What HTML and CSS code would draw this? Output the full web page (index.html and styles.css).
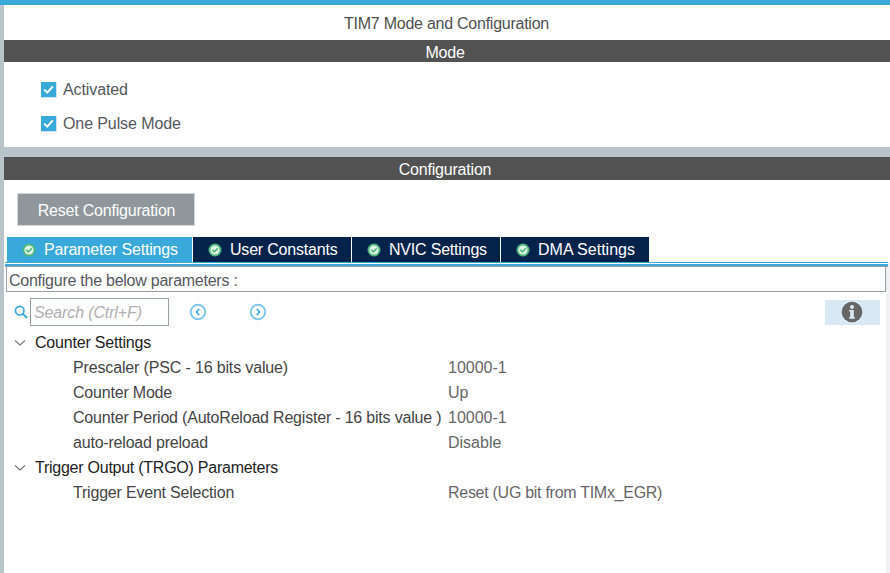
FILE: index.html
```html
<!DOCTYPE html>
<html lang="en">
<head>
<meta charset="utf-8">
<title>TIM7 Mode and Configuration</title>
<link rel="stylesheet" href="styles.css">
</head>
<body>
<div class="topbar"></div>
<main class="panel">
  <h1 class="title">TIM7 Mode and Configuration</h1>
  <h2 class="band band-mode">Mode</h2>
  <section class="mode">
    <label class="check"><span class="box"><svg viewBox="0 0 15 15" width="15" height="15"><path d="M3.2 7.6 6.3 10.6 11.8 4.4" fill="none" stroke="#fff" stroke-width="2"/></svg></span>Activated</label>
    <label class="check"><span class="box"><svg viewBox="0 0 15 15" width="15" height="15"><path d="M3.2 7.6 6.3 10.6 11.8 4.4" fill="none" stroke="#fff" stroke-width="2"/></svg></span>One Pulse Mode</label>
  </section>
  <div class="divider"></div>
  <h2 class="band band-config">Configuration</h2>
  <section class="config">
    <button class="reset">Reset Configuration</button>
    <div class="tabs">
      <div class="tab tab-active"><svg class="ok" viewBox="0 0 14 14" width="14" height="14"><circle cx="7" cy="7" r="6.5" fill="#4fb77c"/><circle cx="7" cy="7" r="4.6" fill="#dff3e7"/><path d="M4.3 6.8 6.3 8.8 9.8 5.4" fill="none" stroke="#4fb77c" stroke-width="1.6"/></svg>Parameter Settings</div>
      <div class="tab tab-user"><svg class="ok" viewBox="0 0 14 14" width="14" height="14"><circle cx="7" cy="7" r="6.5" fill="#4fb77c"/><circle cx="7" cy="7" r="4.6" fill="#dff3e7"/><path d="M4.3 6.8 6.3 8.8 9.8 5.4" fill="none" stroke="#4fb77c" stroke-width="1.6"/></svg>User Constants</div>
      <div class="tab tab-nvic"><svg class="ok" viewBox="0 0 14 14" width="14" height="14"><circle cx="7" cy="7" r="6.5" fill="#4fb77c"/><circle cx="7" cy="7" r="4.6" fill="#dff3e7"/><path d="M4.3 6.8 6.3 8.8 9.8 5.4" fill="none" stroke="#4fb77c" stroke-width="1.6"/></svg>NVIC Settings</div>
      <div class="tab tab-dma"><svg class="ok" viewBox="0 0 14 14" width="14" height="14"><circle cx="7" cy="7" r="6.5" fill="#4fb77c"/><circle cx="7" cy="7" r="4.6" fill="#dff3e7"/><path d="M4.3 6.8 6.3 8.8 9.8 5.4" fill="none" stroke="#4fb77c" stroke-width="1.6"/></svg>DMA Settings</div>
    </div>
    <div class="sheet">
      <div class="rule"></div>
      <div class="hint">Configure the below parameters :</div>
      <div class="toolbar">
        <svg class="search-icon" viewBox="0 0 14 14" width="14" height="14"><circle cx="5.7" cy="5.7" r="4.3" fill="none" stroke="#39a9dc" stroke-width="1.7"/><path d="M8.8 8.8 13 13" stroke="#39a9dc" stroke-width="2"/></svg>
        <div class="search">Search (Ctrl+F)</div>
        <svg class="nav nav-prev" viewBox="0 0 18 18" width="18" height="18"><circle cx="9" cy="9" r="7.2" fill="none" stroke="#7cc8ea" stroke-width="2"/><path d="M10.3 6 7.5 9 10.3 12" fill="none" stroke="#39a9dc" stroke-width="1.6"/></svg>
        <svg class="nav nav-next" viewBox="0 0 18 18" width="18" height="18"><circle cx="9" cy="9" r="7.2" fill="none" stroke="#7cc8ea" stroke-width="2"/><path d="M7.7 6 10.5 9 7.7 12" fill="none" stroke="#39a9dc" stroke-width="1.6"/></svg>
        <div class="info"><svg viewBox="0 0 22 22" width="22" height="22"><circle cx="11" cy="11" r="10.3" fill="#666"/><rect x="9.2" y="9" width="3.6" height="8.4" fill="#dbe9f5"/><rect x="8" y="9" width="4" height="1.4" fill="#dbe9f5"/><rect x="8" y="16.2" width="6" height="1.4" fill="#dbe9f5"/><circle cx="11" cy="6" r="2" fill="#dbe9f5"/></svg></div>
      </div>
      <div class="tree">
        <div class="row group"><svg class="chev" viewBox="0 0 12 8" width="12" height="8"><path d="M1 1.5 6 6 11 1.5" fill="none" stroke="#777" stroke-width="1.1"/></svg><span>Counter Settings</span></div>
        <div class="row param"><span class="name name-tight">Prescaler (PSC - 16 bits value)</span><span class="value">10000-1</span></div>
        <div class="row param"><span class="name">Counter Mode</span><span class="value">Up</span></div>
        <div class="row param"><span class="name">Counter Period (AutoReload Register - 16 bits value )</span><span class="value">10000-1</span></div>
        <div class="row param"><span class="name">auto-reload preload</span><span class="value">Disable</span></div>
        <div class="row group group-wide"><svg class="chev" viewBox="0 0 12 8" width="12" height="8"><path d="M1 1.5 6 6 11 1.5" fill="none" stroke="#777" stroke-width="1.1"/></svg><span>Trigger Output (TRGO) Parameters</span></div>
        <div class="row param"><span class="name">Trigger Event Selection</span><span class="value value-long">Reset (UG bit from TIMx_EGR)</span></div>
      </div>
    </div>
  </section>
</main>
</body>
</html>
```
FILE: styles.css
```css
* { box-sizing: border-box; }
html, body { margin: 0; height: 100%; overflow: hidden; }
body {
  font-family: "Liberation Sans", Arial, sans-serif;
  font-size: 16px;
  letter-spacing: -0.2px;
  color: #4f4f4f;
  background: #fff;
}
.topbar { height: 5px; background: #39a9dc; }
.panel {
  height: 568px;
  border-left: 4px solid #b8c3ca;
  display: flex;
  flex-direction: column;
}
.title {
  margin: 0;
  height: 35px;
  line-height: 37px;
  padding-right: 1px;
  font-size: 16px;
  font-weight: normal;
  letter-spacing: -0.25px;
  text-align: center;
  color: #4f4f4f;
}
.band {
  margin: 0;
  padding-right: 4px;
  background: #515251;
  color: #fff;
  font-size: 16px;
  font-weight: normal;
  text-align: center;
}
.band-mode { height: 22px; line-height: 25px; }
.band-config { height: 23px; line-height: 26px; }
.mode {
  height: 85px;
  padding: 17px 0 0 37px;
  display: flex;
  flex-direction: column;
  gap: 12px;
}
.check { display: flex; align-items: center; height: 22px; color: #55585c; letter-spacing: -0.1px; }
.box {
  width: 16px;
  height: 16px;
  margin-right: 6px;
  background: #39a9dc;
  border-right: 1px solid #cfe6f3;
  border-bottom: 1px solid #cfe6f3;
  display: block;
}
.box svg { display: block; }
.divider { height: 10px; background: #b8c3ca; }
.config { flex: 1; min-height: 0; display: flex; flex-direction: column; }
.reset {
  display: block;
  width: 178px;
  height: 33px;
  margin: 13px 0 0 13px;
  padding: 2px 0 0 1px;
  border: 1px solid #d5d8da;
  background: #8f979c;
  color: #fff;
  font: 16px "Liberation Sans", Arial, sans-serif;
  letter-spacing: -0.2px;
}
.tabs { display: flex; margin: 11px 0 0 3px; height: 25px; gap: 1px; }
.tab {
  display: flex;
  align-items: center;
  background: #03234b;
  color: #fff;
  padding-left: 15px;
  height: 25px;
}
.tab-active { width: 185px; background: #39a9dc; letter-spacing: -0.17px; }
.tab-user { width: 158px; }
.tab-nvic { width: 148px; }
.tab-dma { width: 148px; letter-spacing: 0; }
.ok { margin-right: 8px; flex: none; }
.sheet {
  flex: 1;
  min-height: 0;
  border-right: 4px solid #f0f0f5;
}
.rule {
  height: 5px;
  margin: 0 -2px 0 1px;
  border-top: 1px solid #39a9dc;
  border-bottom: 1px solid #9a9fa6;
  background: linear-gradient(#fff 1px, #39a9dc 1px);
}
.hint {
  height: 25px;
  margin-left: 2px;
  border-style: solid;
  border-color: #9a9fa6;
  border-width: 0 1px 1px 1px;
  line-height: 28px;
  padding-left: 2px;
  letter-spacing: -0.25px;
  color: #55585c;
}
.toolbar {
  height: 32px;
  display: flex;
  align-items: center;
  padding-left: 10px;
  margin-top: 4px;
}
.search-icon { flex: none; margin-right: 2px; }
.search {
  width: 139px;
  height: 28px;
  border: 1px solid #9a9fa6;
  line-height: 27px;
  padding-left: 3px;
  font-style: italic;
  letter-spacing: -0.13px;
  color: #b0b0b0;
}
.nav { flex: none; }
.nav-prev { margin-left: 20px; }
.nav-next { margin-left: 42px; }
.info {
  width: 55px;
  height: 25px;
  margin-left: auto;
  margin-right: 6px;
  padding-right: 2px;
  background: #d9e8f5;
  display: flex;
  align-items: center;
  justify-content: center;
}
.tree { margin-top: 2px; }
.row { display: flex; align-items: center; height: 25px; white-space: nowrap; }
.group { color: #222; padding-left: 10px; }
.group-wide { letter-spacing: -0.25px; }
.chev { margin-right: 9px; flex: none; }
.param { padding-left: 69px; color: #444; }
.name { width: 375px; flex: none; }
.name-tight { letter-spacing: -0.15px; }
.value { color: #666; letter-spacing: 0; }
.value-long { letter-spacing: -0.28px; }
```
